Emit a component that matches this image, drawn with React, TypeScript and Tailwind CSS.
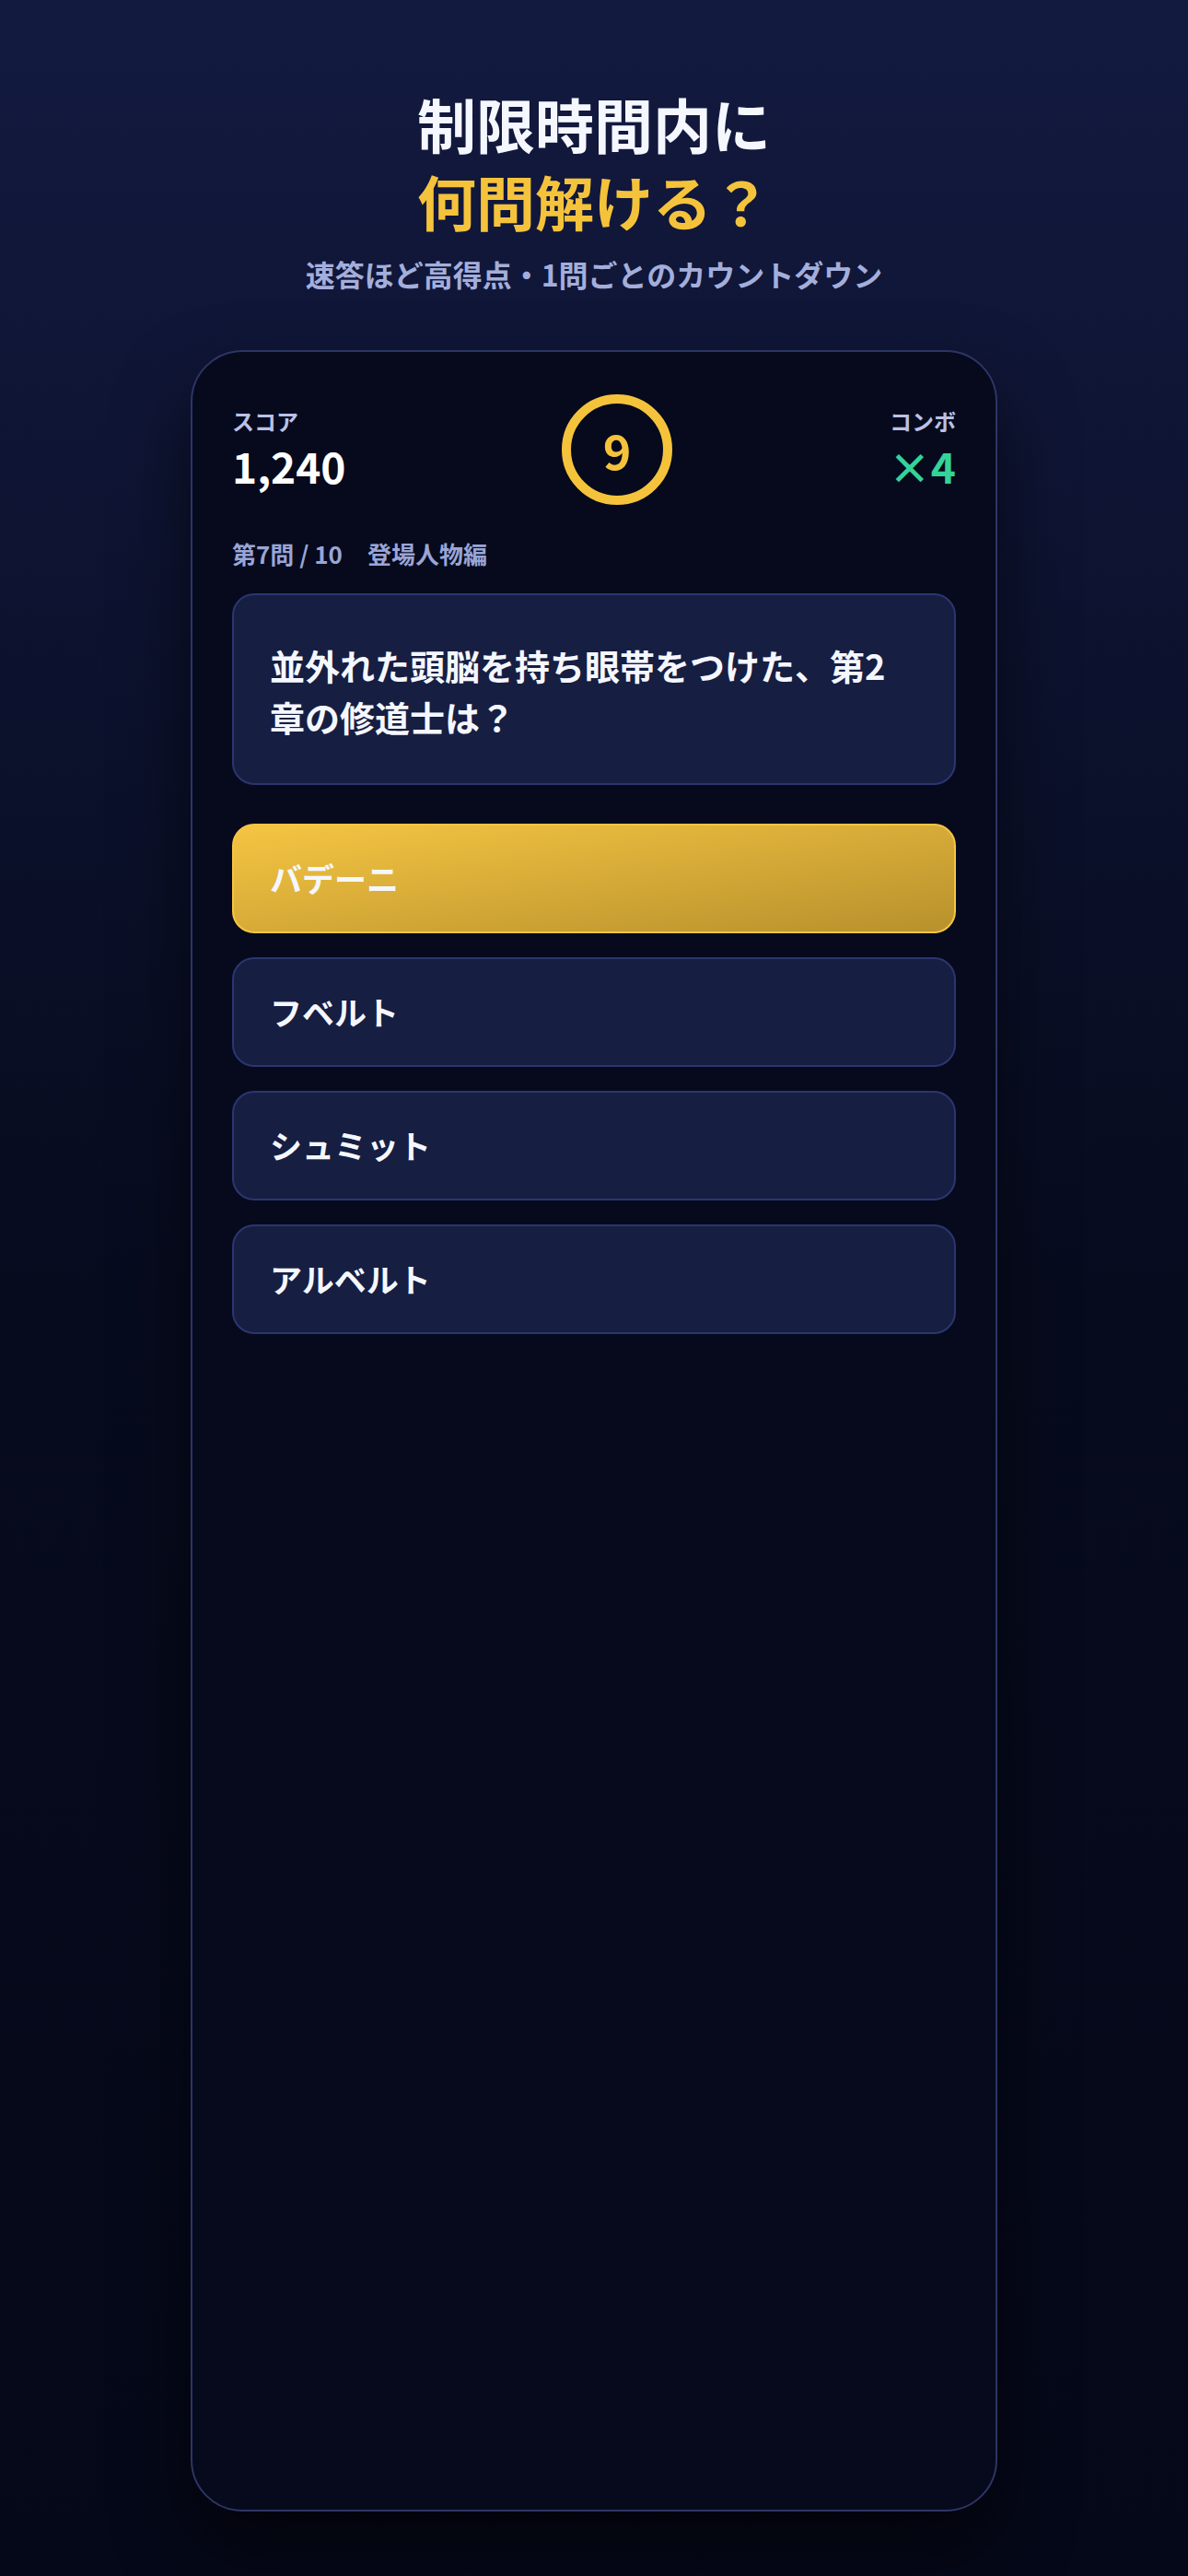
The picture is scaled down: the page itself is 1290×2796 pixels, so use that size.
import React from 'react'

const font = { fontFamily: '"Noto Sans CJK JP", "Noto Sans", sans-serif' }

const choices = ['バデーニ', 'フベルト', 'シュミット', 'アルベルト']

function Stat({ label, value, align, tone }: { label: string; value: string; align: 'left' | 'right'; tone: string }) {
  return (
    <div className={`flex flex-col ${align === 'right' ? 'items-end' : 'items-start'}`}>
      <span className="text-[24px] leading-[34px] font-bold text-[#b9c1e6]">{label}</span>
      <span className={`text-[46px] leading-[62px] font-bold ${tone}`}>{value}</span>
    </div>
  )
}

export default function App() {
  const selected = 0

  return (
    <div
      style={font}
      className="min-h-[2796px] w-full bg-gradient-to-b from-[#131a40] via-[#070b1e] to-[#050818] flex flex-col items-center pt-[91px]"
    >
      {/* Hero */}
      <h1 className="text-center text-[64px] leading-[84px] font-bold">
        <span className="block text-[#f5f7ff]">制限時間内に</span>
        <span className="block text-[#f5c33b]">何問解ける？</span>
      </h1>
      <p className="mt-[14px] text-[32px] leading-[48px] font-bold text-[#a3aedb]">
        速答ほど高得点・1問ごとのカウントダウン
      </p>

      {/* Game card */}
      <div className="mt-[59px] w-[876px] h-[2346px] rounded-[56px] border-2 border-[#2d3566] bg-[#060a1c] shadow-[0_40px_80px_rgba(0,0,0,0.55)] px-[43px] pt-[46px]">
        <div className="flex items-center justify-between">
          <Stat label="スコア" value="1,240" align="left" tone="text-white" />
          <div className="w-[120px] h-[120px] rounded-full border-[10px] border-[#f5c33b] flex items-center justify-center">
            <span className="text-[52px] leading-none font-bold text-[#f5c33b]">9</span>
          </div>
          <Stat label="コンボ" value="×4" align="right" tone="text-[#34d399]" />
        </div>

        <div className="mt-[33px] text-[26px] leading-[39px] font-bold text-[#9aa5d6]">
          第7問 / 10<span className="ml-[27px]">登場人物編</span>
        </div>

        <div className="mt-[24px] rounded-3xl border-2 border-[#2b3670] bg-[#161e42] px-[39px] pt-[48px] pb-[44px]">
          <p className="text-[38px] leading-[56px] font-bold text-[#f5f7ff]">
            並外れた頭脳を持ち眼帯をつけた、第2章の修道士は？
          </p>
        </div>

        <div className="mt-[42px] flex flex-col gap-[26px]">
          {choices.map((c, i) => (
            <button
              key={c}
              className={`h-[119px] rounded-3xl border-2 px-[39px] text-left text-[35px] font-bold text-[#f5f7ff] ${
                i === selected
                  ? 'border-[#f5c542] bg-gradient-to-br from-[#f5c542] to-[#b8912d]'
                  : 'border-[#2b3670] bg-[#161e42]'
              }`}
            >
              {c}
            </button>
          ))}
        </div>
      </div>
    </div>
  )
}
